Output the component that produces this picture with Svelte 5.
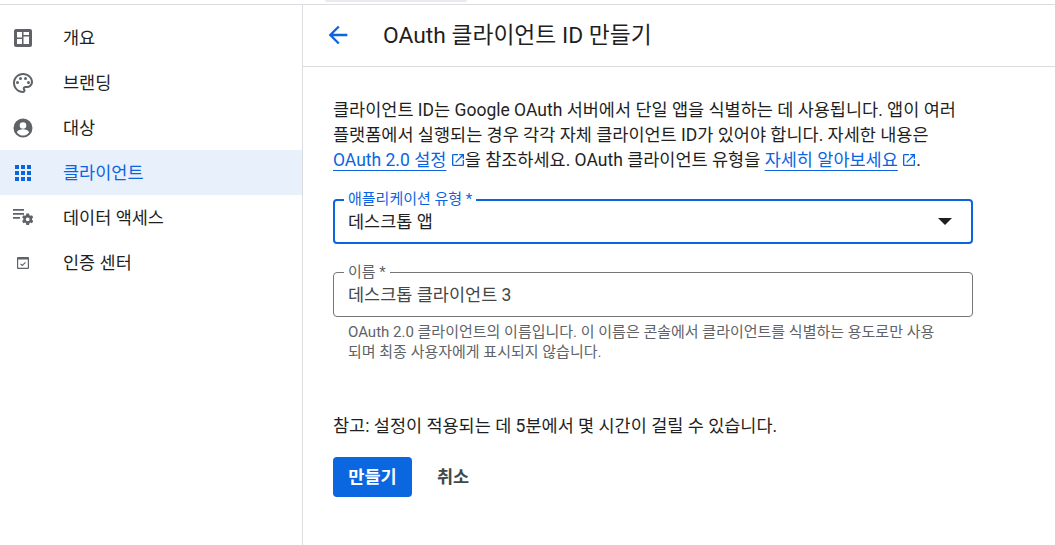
<script>
  const nav = [
    { label: '개요', icon: 'overview' },
    { label: '브랜딩', icon: 'palette' },
    { label: '대상', icon: 'person' },
    { label: '클라이언트', icon: 'grid', active: true },
    { label: '데이터 액세스', icon: 'settings' },
    { label: '인증 센터', icon: 'check' }
  ];
</script>

{#snippet ext()}
  <svg class="ext" viewBox="0 0 24 24" width="16" height="16" aria-hidden="true"><path fill="currentColor" d="M19 19H5V5h7V3H5a2 2 0 0 0-2 2v14a2 2 0 0 0 2 2h14a2 2 0 0 0 2-2v-7h-2v7zM14 3v2h3.59l-9.83 9.83 1.41 1.41L19 6.41V10h2V3h-7z"/></svg>
{/snippet}

<div class="page">
  <div class="topbar"><span class="chip"></span></div>
  <div class="shell">
    <nav class="side">
      {#each nav as item}
        <div class="item" class:active={item.active}>
          <span class="ico">
            {#if item.icon === 'overview'}
              <svg viewBox="0 0 18 18" width="18" height="18"><path fill="currentColor" fill-rule="evenodd" d="M2 0h14a2 2 0 0 1 2 2v14a2 2 0 0 1-2 2H2a2 2 0 0 1-2-2V2a2 2 0 0 1 2-2zM3 3v5.500h5V3zm0 7v5h5v-5zM9.500 3v3H15V3zm0 4.500V15H15V7.500z"/></svg>
            {:else if item.icon === 'palette'}
              <svg viewBox="0 0 24 24" width="24" height="24"><path fill="currentColor" d="M12 2C6.490 2 2 6.490 2 12s4.490 10 10 10c1.380 0 2.500-1.120 2.500-2.500 0-.610-.230-1.200-.640-1.670-.080-.100-.130-.210-.130-.330 0-.280.220-.500.500-.500H16c3.310 0 6-2.690 6-6 0-4.960-4.490-9-10-9zm4 13h-1.770c-1.380 0-2.500 1.120-2.500 2.500 0 .610.220 1.190.620 1.650.070.080.150.200.150.350 0 .280-.220.500-.500.500-4.410 0-8-3.590-8-8s3.590-8 8-8 8 3.140 8 7c0 2.210-1.790 4-4 4z"/><circle fill="currentColor" cx="6.500" cy="11.500" r="1.500"/><circle fill="currentColor" cx="9.500" cy="7.500" r="1.500"/><circle fill="currentColor" cx="14.500" cy="7.500" r="1.500"/><circle fill="currentColor" cx="17.500" cy="11.500" r="1.500"/></svg>
            {:else if item.icon === 'person'}
              <svg viewBox="0 0 24 24" width="24" height="24"><path fill="currentColor" fill-rule="evenodd" d="M12 2.500a9.500 9.500 0 1 0 0 19 9.500 9.500 0 0 0 0-19zm0 3.700a3.300 3.300 0 1 1 0 6.600 3.300 3.300 0 0 1 0-6.600zm0 13.300a7.400 7.400 0 0 1-6-3.100c.030-2 4-3.100 6-3.100s5.970 1.100 6 3.100a7.400 7.400 0 0 1-6 3.100z"/></svg>
            {:else if item.icon === 'grid'}
              <svg viewBox="0 0 16 16" width="16" height="16"><path fill="currentColor" d="M0 0h4v4H0zM6 0h4v4H6zM12 0h4v4h-4zM0 6h4v4H0zM6 6h4v4H6zM12 6h4v4h-4zM0 12h4v4H0zM6 12h4v4h-4zM12 12h4v4h-4z"/></svg>
            {:else if item.icon === 'settings'}
              <svg viewBox="0 0 20 20" width="20" height="20"><path fill="currentColor" d="M0 1h11v1.700H0zM0 5h11v1.700H0zM0 9h7v1.700H0z"/><path fill="currentColor" fill-rule="evenodd" d="M13.300 5.500h2.800l.300 1.700 1 .600 1.600-.6 1.300 2.300-1.300 1.100v1.200l1.300 1.100-1.300 2.300-1.600-.6-1 .6-.3 1.700h-2.800l-.300-1.700-1-.600-1.600.6-1.300-2.300 1.300-1.100v-1.200l-1.300-1.100 1.300-2.300 1.600.6 1-.6zm1.400 3.900a1.900 1.900 0 1 0 0 3.800 1.900 1.900 0 0 0 0-3.800z"/></svg>
            {:else}
              <svg viewBox="0 0 12 12" width="12" height="12"><path fill="currentColor" fill-rule="evenodd" d="M1 0h10a1 1 0 0 1 1 1v10a1 1 0 0 1-1 1H1a1 1 0 0 1-1-1V1a1 1 0 0 1 1-1zm.2 2.600v8.200h9.600V2.600z"/><path fill="none" stroke="currentColor" stroke-width="1.100" d="M3.500 6.800l1.800 1.700 3.200-3.200"/></svg>
            {/if}
          </span>
          <span class="lbl">{item.label}</span>
        </div>
      {/each}
    </nav>
    <main class="main">
      <header class="head">
        <svg class="back" viewBox="0 0 24 24" width="28" height="28"><path fill="currentColor" d="M20 11H7.830l5.590-5.590L12 4l-8 8 8 8 1.410-1.410L7.830 13H20v-2z"/></svg>
        <h1>OAuth 클라이언트 ID 만들기</h1>
      </header>
      <section class="body">
        <p class="intro">클라이언트 ID는 Google OAuth 서버에서 단일 앱을 식별하는 데 사용됩니다. 앱이 여러<br>플랫폼에서 실행되는 경우 각각 자체 클라이언트 ID가 있어야 합니다. 자세한 내용은<br><a href="#a">OAuth 2.0 설정</a> <span class="lk">{@render ext()}</span>을 참조하세요. OAuth 클라이언트 유형을 <a href="#b">자세히 알아보세요</a> <span class="lk">{@render ext()}</span>.</p>

        <div class="field focus">
          <span class="flabel">애플리케이션 유형 *</span>
          <span class="val">데스크톱 앱</span>
          <span class="caret"></span>
        </div>

        <div class="field plain">
          <span class="flabel">이름 *</span>
          <span class="val">데스크톱 클라이언트 3</span>
        </div>
        <p class="hint">OAuth 2.0 클라이언트의 이름입니다. 이 이름은 콘솔에서 클라이언트를 식별하는 용도로만 사용<br>되며 최종 사용자에게 표시되지 않습니다.</p>

        <p class="note">참고: 설정이 적용되는 데 5분에서 몇 시간이 걸릴 수 있습니다.</p>

        <div class="actions">
          <button class="primary">만들기</button>
          <button class="text">취소</button>
        </div>
      </section>
    </main>
  </div>
</div>

<style>
  :global(body) {
    margin: 0;
    background: #fff;
    font-family: Roboto, "Noto Sans CJK KR", sans-serif;
    color: #1f1f1f;
  }
  .page { width: 1055px; height: 545px; overflow: hidden; display: flex; flex-direction: column; }
  .topbar { height: 4px; border-bottom: 1px solid #dadce0; position: relative; flex: none; }
  .chip { position: absolute; left: 325px; top: 0; width: 142px; height: 2px; background: #e8eaed; border-radius: 0 0 4px 4px; }
  .shell { display: flex; flex: 1; min-height: 0; }
  .side { width: 302px; flex: none; border-right: 1px solid #dadce0; padding-top: 10px; }
  .item { height: 45px; display: flex; align-items: center; font-size: 17.500px; line-height: 24px; color: #1f1f1f; }
  .item.active { background: #e8f0fc; color: #0b65e0; }
  .ico { width: 24px; height: 24px; margin-left: 11px; margin-right: 28px; display: flex; align-items: center; justify-content: center; color: #5f6368; }
  .active .ico { color: #0b65e0; }
  .main { flex: 1; min-width: 0; }
  .head { height: 61px; border-bottom: 1px solid #dadce0; display: flex; align-items: center; padding-left: 21px; color: #0b65e0; }
  .back { flex: none; margin-right: 31px; margin-top: -2px; }
  h1 { margin: -4px 0 0; font-size: 22.800px; font-weight: 400; color: #1f1f1f; }
  .body { padding: 31px 0 0 30px; width: 640px; }
  .intro { margin: 0; font-size: 17.500px; line-height: 25px; color: #1f1f1f; white-space: nowrap; }
  a { color: #0b65e0; text-decoration: underline; text-underline-offset: 4px; }
  .lk { color: #0b65e0; }
  .ext { vertical-align: -2px; width: 16px; height: 16px; margin: 0 -1px 0 -1px; }
  .field { position: relative; box-sizing: border-box; width: 640px; height: 45px; border-radius: 4px; display: flex; align-items: center; padding-left: 14px; font-size: 17.500px; }
  .focus { margin-top: 26px; border: 2px solid #0b65e0; padding: 0 0 2px 13px; color: #1f1f1f; }
  .plain { margin-top: 28px; border: 1px solid #747775; padding-bottom: 3px; color: #444746; }
  .flabel { position: absolute; left: 10px; top: -9px; padding: 0 4px; background: #fff; font-size: 15px; line-height: 16px; }
  .focus .flabel { color: #0b65e0; left: 9px; top: -10px; }
  .plain .flabel { color: #5f6368; }
  .caret { position: absolute; right: 19px; top: 17px; border-left: 7px solid transparent; border-right: 7px solid transparent; border-top: 7px solid #1f1f1f; }
  .hint { margin: 5px 0 0 15px; font-size: 15px; line-height: 20px; color: #5f6368; white-space: nowrap; }
  .note { margin: 52px 0 0; font-size: 17.500px; line-height: 24px; white-space: nowrap; }
  .actions { display: flex; gap: 9px; margin-top: 19px; }
  button { font: inherit; font-size: 17.500px; font-weight: 600; border: 0; border-radius: 4px; height: 40px; padding: 0 0 4px; }
  .primary { width: 79px; background: #0b67e0; color: #fff; }
  .text { width: 64px; background: transparent; color: #444746; }
</style>
